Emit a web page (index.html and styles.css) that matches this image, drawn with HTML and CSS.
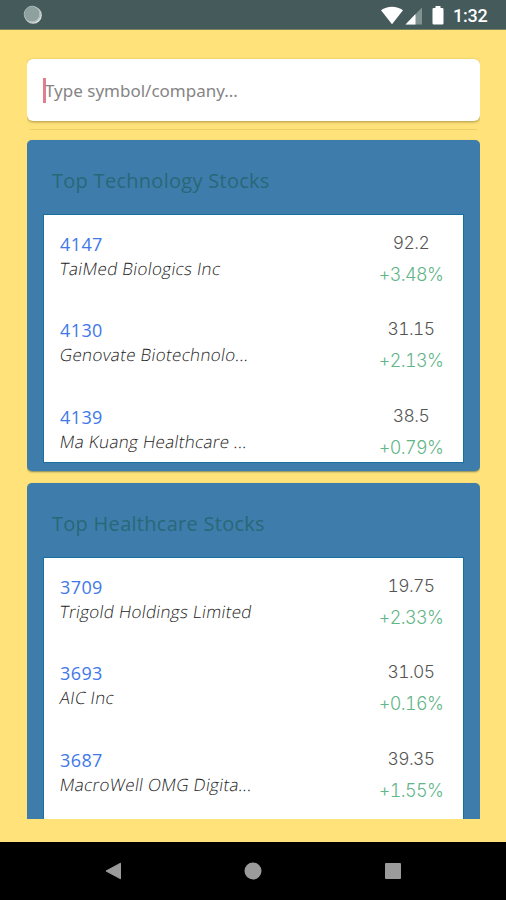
FILE: index.html
```html
<!DOCTYPE html>
<html lang="en">
<head>
    <meta charset="UTF-8">
    <meta name="viewport" content="width=device-width, initial-scale=1.0">
    <title>Stocks</title>
    <link rel="stylesheet" href="styles.css">
</head>
<body>
    <header class="status-bar">
        <svg class="sync" width="20" height="20" viewBox="0 0 20 20">
            <circle cx="10.2" cy="10.2" r="8.6" fill="#d5dddb"/>
            <circle cx="9" cy="9" r="7.6" fill="#8fa19e"/>
            <circle cx="9.2" cy="9.2" r="8" fill="none" stroke="#a9b6b4" stroke-width="1"/>
        </svg>
        <div class="status-icons">
            <svg width="54" height="20" viewBox="0 0 54 20">
                <path d="M0 4.3C6-.5 16-.5 22 4.3L11 18.2z" fill="#fff"/>
                <path d="M41 1.5V18.5H24.5z" fill="#819390"/>
                <path d="M34.5 8V18.5H24.5z" fill="#fff"/>
            </svg>
            <svg class="battery" width="12" height="20" viewBox="0 0 12 20">
                <path d="M3.5 0h5v2H10.300a1.200 1.200 0 0 1 1.200 1.200V17.300a1.200 1.200 0 0 1-1.200 1.200H1.700A1.200 1.200 0 0 1 .5 17.300V3.200A1.200 1.200 0 0 1 1.700 2H3.500z" fill="#fff"/>
            </svg>
            <span class="clock">1:32</span>
        </div>
    </header>

    <main class="content">
        <div class="search">
            <span class="caret"></span>
            <span class="placeholder">Type symbol/company...</span>
        </div>
        <div class="divider"></div>

        <section class="card">
            <h2>Top Technology Stocks</h2>
            <ul class="stocks">
                <li>
                    <div class="company"><span class="symbol">4147</span><span class="name">TaiMed Biologics Inc</span></div>
                    <div class="quote"><span class="price">92.2</span><span class="change">+3.48%</span></div>
                </li>
                <li>
                    <div class="company"><span class="symbol">4130</span><span class="name">Genovate Biotechnolo...</span></div>
                    <div class="quote"><span class="price">31.15</span><span class="change">+2.13%</span></div>
                </li>
                <li>
                    <div class="company"><span class="symbol">4139</span><span class="name">Ma Kuang Healthcare ...</span></div>
                    <div class="quote"><span class="price">38.5</span><span class="change">+0.79%</span></div>
                </li>
            </ul>
        </section>

        <section class="card">
            <h2>Top Healthcare Stocks</h2>
            <ul class="stocks">
                <li>
                    <div class="company"><span class="symbol">3709</span><span class="name">Trigold Holdings Limited</span></div>
                    <div class="quote"><span class="price">19.75</span><span class="change">+2.33%</span></div>
                </li>
                <li>
                    <div class="company"><span class="symbol">3693</span><span class="name">AIC Inc</span></div>
                    <div class="quote"><span class="price">31.05</span><span class="change">+0.16%</span></div>
                </li>
                <li>
                    <div class="company"><span class="symbol">3687</span><span class="name">MacroWell OMG Digita...</span></div>
                    <div class="quote"><span class="price">39.35</span><span class="change">+1.55%</span></div>
                </li>
            </ul>
        </section>
    </main>

    <nav class="nav-bar">
        <svg width="18" height="18" viewBox="0 0 18 18"><path d="M2 9L16.500 1.200V16.800z" fill="#9b9b9b" stroke="#9b9b9b" stroke-linejoin="round"/></svg>
        <svg width="18" height="18" viewBox="0 0 18 18"><circle cx="9" cy="9" r="8.500" fill="#9b9b9b"/></svg>
        <svg width="18" height="18" viewBox="0 0 18 18"><rect x="1" y="1" width="16" height="16" rx="1" fill="#9b9b9b"/></svg>
    </nav>
</body>
</html>
```
FILE: styles.css
```css
* {
    box-sizing: border-box;
}

body {
    margin: 0;
    height: 900px;
    display: flex;
    flex-direction: column;
    overflow: hidden;
    background: #ffe37a;
    font-family: "Open Sans", sans-serif;
}

.status-bar {
    flex: none;
    height: 30px;
    display: flex;
    justify-content: space-between;
    padding: 5px 18px 0 23px;
    background: #445a5b;
    border-bottom: 1px solid #7b8158;
}

.status-icons {
    display: flex;
}

.battery {
    margin-left: -3px;
}

.status-icons svg {
    margin-top: 1px;
}

.clock {
    width: 35px;
    margin-left: 9px;
    font: 500 18px/22px Roboto, sans-serif;
    letter-spacing: -0.2px;
    color: #fff;
    white-space: nowrap;
}

.content {
    flex: none;
    height: 789px;
    margin: 0 26px 0 27px;
    padding-top: 29px;
    overflow: hidden;
}

.search {
    height: 62px;
    display: flex;
    align-items: center;
    padding-left: 16px;
    background: #fff;
    border-radius: 6px;
    box-shadow: 0 1px 3px rgba(90, 70, 10, 0.5);
}

.caret {
    width: 3px;
    height: 25px;
    background: #e07f8e;
}

.placeholder {
    margin: 1px 0 0 -1px;
    font-family: "Noto Sans", sans-serif;
    font-size: 17px;
    color: #858585;
}

.divider {
    height: 1px;
    margin: 8px 3px 10px;
    background: #edcf68;
}

.card {
    height: 331px;
    margin-bottom: 12px;
    padding: 0 17px;
    background: #3e7dab;
    border-radius: 5px;
    box-shadow: 0 1px 2px rgba(40, 70, 70, 0.6);
}

.card + .card {
    height: 360px;
    margin-bottom: 0;
}

.card h2 {
    margin: 0;
    height: 75px;
    padding-left: 8px;
    font-size: 20px;
    line-height: 81px;
    font-weight: 400;
    letter-spacing: 0.28px;
    color: #286878;
    white-space: nowrap;
}

.stocks {
    height: 247px;
    margin: 0;
    padding: 0 15px 0 16px;
    overflow: hidden;
    list-style: none;
    background: #fff;
    box-shadow: 0 0 0 1px #18709f;
}

.card + .card .stocks {
    height: 285px;
}

.stocks li {
    height: 86.3px;
    display: flex;
    justify-content: space-between;
    white-space: nowrap;
}

.company,
.quote {
    display: flex;
    flex-direction: column;
}

.company {
    padding-top: 17px;
}

.symbol {
    font-size: 18px;
    line-height: 25px;
    letter-spacing: 0.4px;
    color: #4078e8;
}

/* slanted upright letters, the italic face has different shapes */
.name {
    font-size: 17px;
    line-height: 24px;
    font-weight: 300;
    font-synthesis: style;
    letter-spacing: 0.32px;
    color: #222;
    transform: skewX(-9deg);
}

.quote {
    width: 74px;
    padding-top: 12px;
    align-items: center;
    font-family: Inter, sans-serif;
    font-variant-numeric: tabular-nums;
    font-weight: 300;
    font-size: 18px;
    line-height: 32px;
    letter-spacing: -0.6px;
}

.price {
    font-size: 17.5px;
    color: #555;
}

.change {
    color: #62b587;
}

.nav-bar {
    flex: none;
    height: 58px;
    margin-top: auto;
    display: flex;
    justify-content: space-between;
    align-items: center;
    padding: 0 104px;
    background: #000;
}
```
